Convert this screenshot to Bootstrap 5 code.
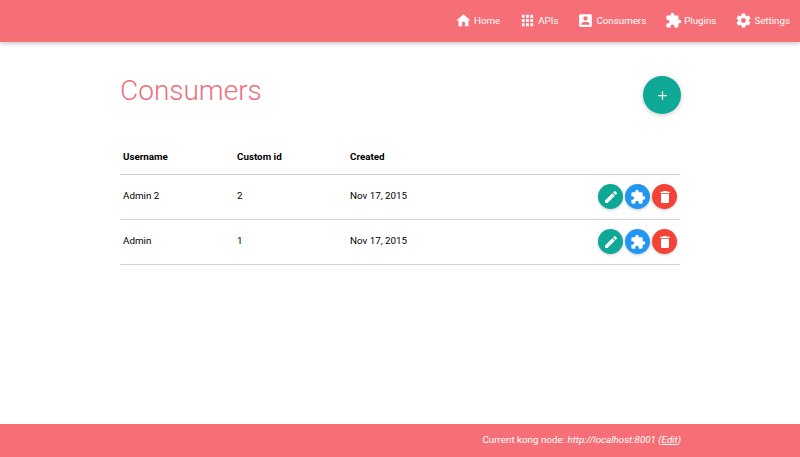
<!doctype html>
<html lang="en"><head><meta charset="utf-8"><title>Consumers</title>
<link href="https://cdn.jsdelivr.net/npm/bootstrap@5.3.0/dist/css/bootstrap.min.css" rel="stylesheet">
<style>
html,body{height:100%}
body{font-family:Roboto,sans-serif;font-size:9.8px;color:#000;background:#fff}
.app{height:457px;overflow:hidden}
.topbar{background:#f66f76;height:42px;box-shadow:0 2px 4px rgba(0,0,0,.2);padding-right:10px;gap:19px;padding-bottom:1px;z-index:2}
.topbar a{color:#fff;text-decoration:none;font-size:9.75px;gap:2px;line-height:1}
.topbar svg{fill:#fff;display:block}
.content{width:560px;margin-left:120px}
.page-head{height:99px;padding-top:32px}
h1.title{color:#ec6f7c;font-size:28px;font-weight:300;line-height:33px;margin:0}
.fab{width:38px;height:38px;border-radius:50%;background:#0ea896;color:#fff;border:0;padding:0;box-shadow:0 1px 5px rgba(0,0,0,.22);margin-top:2px;margin-right:-1px}
.fab svg{fill:#fff}
.tbl{--bs-table-bg:transparent;margin:0;font-size:9.8px}
.tbl th,.tbl td{padding:0 3px;vertical-align:middle;border-bottom:1px solid #d3d3d3;color:#000}
.tbl td{height:45px}
.tbl .c1{width:114px}.tbl .c2{width:113px}
.tbl th{height:33px;font-weight:700;vertical-align:top;padding-top:9px}
.acts{gap:2px;margin-right:0}
.rb{width:25px;height:25px;border-radius:50%;border:0;padding:0;box-shadow:0 1px 3px rgba(0,0,0,.22)}
.rb svg{fill:#fff;display:block;margin:auto}
.teal{background:#0ea896}.blue{background:#2196f3}.red{background:#f44336}
.foot{background:#f66f76;height:33px;color:#fff;padding-right:119px;font-size:9.8px}
.foot a{color:#fff}
</style></head>
<body>
<div class="app d-flex flex-column">
<nav class="topbar d-flex align-items-center justify-content-end flex-shrink-0 position-relative">
<a href="#" class="d-flex align-items-center"><svg width="17" height="17" viewBox="0 0 24 24"><path d="M10 20v-6h4v6h5v-8h3L12 3 2 12h3v8z"/></svg>Home</a>
<a href="#" class="d-flex align-items-center"><svg width="17" height="17" viewBox="0 0 24 24"><path d="M4 8h4V4H4v4zm6 12h4v-4h-4v4zm-6 0h4v-4H4v4zm0-6h4v-4H4v4zm6 0h4v-4h-4v4zm6-10v4h4V4h-4zm-6 4h4V4h-4v4zm6 6h4v-4h-4v4zm0 6h4v-4h-4v4z"/></svg>APIs</a>
<a href="#" class="d-flex align-items-center"><svg width="17" height="17" viewBox="0 0 24 24"><path d="M3 5v14a2 2 0 0 0 2 2h14a2 2 0 0 0 2-2V5a2 2 0 0 0-2-2H5a2 2 0 0 0-2 2zm12 4a3 3 0 1 1-6 0 3 3 0 0 1 6 0zm-9 8c0-2 4-3.100 6-3.100s6 1.100 6 3.100v1H6v-1z"/></svg>Consumers</a>
<a href="#" class="d-flex align-items-center"><svg width="17" height="17" viewBox="0 0 24 24"><path d="M20.500 11H19V7a2 2 0 0 0-2-2h-4V3.500a2.500 2.500 0 0 0-5 0V5H4a2 2 0 0 0-2 2v3.800h1.500a2.700 2.700 0 0 1 0 5.400H2V20a2 2 0 0 0 2 2h3.800v-1.500a2.700 2.700 0 0 1 5.400 0V22H17a2 2 0 0 0 2-2v-4h1.500a2.500 2.500 0 0 0 0-5z"/></svg>Plugins</a>
<a href="#" class="d-flex align-items-center"><svg width="17" height="17" viewBox="0 0 24 24"><path d="M19.430 12.980c.04-.32.070-.64.070-.98s-.03-.66-.07-.98l2.110-1.650c.19-.15.240-.42.120-.64l-2-3.460c-.12-.22-.39-.3-.61-.22l-2.490 1c-.52-.4-1.080-.73-1.690-.98l-.38-2.650A.49.490 0 0 0 14 2h-4c-.25 0-.46.180-.49.420l-.38 2.650c-.61.250-1.170.590-1.690.98l-2.490-1c-.23-.09-.49 0-.61.220l-2 3.460c-.13.220-.07.490.12.640l2.110 1.650c-.04.320-.07.650-.07.980s.03.660.07.980l-2.110 1.650c-.19.150-.24.420-.12.640l2 3.460c.12.220.39.300.61.220l2.490-1c.52.400 1.080.730 1.690.980l.38 2.650c.03.240.24.420.49.420h4c.25 0 .46-.18.49-.42l.38-2.650c.61-.25 1.170-.59 1.690-.98l2.490 1c.23.090.49 0 .61-.22l2-3.460c.12-.22.07-.49-.12-.64l-2.110-1.650zM12 15.500a3.500 3.500 0 1 1 0-7 3.500 3.500 0 0 1 0 7z"/></svg>Settings</a>
</nav>
<main class="flex-grow-1">
<div class="content">
<div class="page-head d-flex justify-content-between align-items-start">
<h1 class="title">Consumers</h1>
<button class="fab d-flex align-items-center justify-content-center" aria-label="Add"><svg width="15" height="15" viewBox="0 0 24 24"><path d="M19 13h-6v6h-2v-6H5v-2h6V5h2v6h6v2z"/></svg></button>
</div>
<table class="table tbl">
<thead><tr><th class="c1">Username</th><th class="c2">Custom id</th><th>Created</th><th></th></tr></thead>
<tbody>
<tr><td>Admin 2</td><td>2</td><td>Nov 17, 2015</td><td><div class="acts d-flex justify-content-end">
<button class="rb teal" aria-label="Edit"><svg width="16" height="16" viewBox="0 0 24 24"><path d="M3 17.250V21h3.750L17.810 9.940l-3.750-3.750L3 17.250zM20.710 7.040a1 1 0 0 0 0-1.410l-2.340-2.340a1 1 0 0 0-1.410 0l-1.830 1.830 3.750 3.750 1.830-1.830z"/></svg></button>
<button class="rb blue" aria-label="Plugins"><svg width="16" height="16" viewBox="0 0 24 24"><path d="M20.500 11H19V7a2 2 0 0 0-2-2h-4V3.500a2.500 2.500 0 0 0-5 0V5H4a2 2 0 0 0-2 2v3.800h1.500a2.700 2.700 0 0 1 0 5.400H2V20a2 2 0 0 0 2 2h3.800v-1.500a2.700 2.700 0 0 1 5.400 0V22H17a2 2 0 0 0 2-2v-4h1.500a2.500 2.500 0 0 0 0-5z"/></svg></button>
<button class="rb red" aria-label="Delete"><svg width="16" height="16" viewBox="0 0 24 24"><path d="M6 19a2 2 0 0 0 2 2h8a2 2 0 0 0 2-2V7H6v12zM19 4h-3.500l-1-1h-5l-1 1H5v2h14V4z"/></svg></button>
</div></td></tr>
<tr><td>Admin</td><td>1</td><td>Nov 17, 2015</td><td><div class="acts d-flex justify-content-end">
<button class="rb teal" aria-label="Edit"><svg width="16" height="16" viewBox="0 0 24 24"><path d="M3 17.250V21h3.750L17.810 9.940l-3.750-3.750L3 17.250zM20.710 7.040a1 1 0 0 0 0-1.410l-2.340-2.340a1 1 0 0 0-1.410 0l-1.830 1.830 3.750 3.750 1.830-1.830z"/></svg></button>
<button class="rb blue" aria-label="Plugins"><svg width="16" height="16" viewBox="0 0 24 24"><path d="M20.500 11H19V7a2 2 0 0 0-2-2h-4V3.500a2.500 2.500 0 0 0-5 0V5H4a2 2 0 0 0-2 2v3.800h1.500a2.700 2.700 0 0 1 0 5.400H2V20a2 2 0 0 0 2 2h3.800v-1.500a2.700 2.700 0 0 1 5.400 0V22H17a2 2 0 0 0 2-2v-4h1.500a2.500 2.500 0 0 0 0-5z"/></svg></button>
<button class="rb red" aria-label="Delete"><svg width="16" height="16" viewBox="0 0 24 24"><path d="M6 19a2 2 0 0 0 2 2h8a2 2 0 0 0 2-2V7H6v12zM19 4h-3.500l-1-1h-5l-1 1H5v2h14V4z"/></svg></button>
</div></td></tr>
</tbody></table>
</div>
</main>
<footer class="foot d-flex align-items-center justify-content-end flex-shrink-0"><span>Current kong node: <em>http://localhost:8001 (<a href="#">Edit</a>)</em></span></footer>
</div>
<script src="https://cdn.jsdelivr.net/npm/bootstrap@5.3.0/dist/js/bootstrap.bundle.min.js"></script>
</body></html>
